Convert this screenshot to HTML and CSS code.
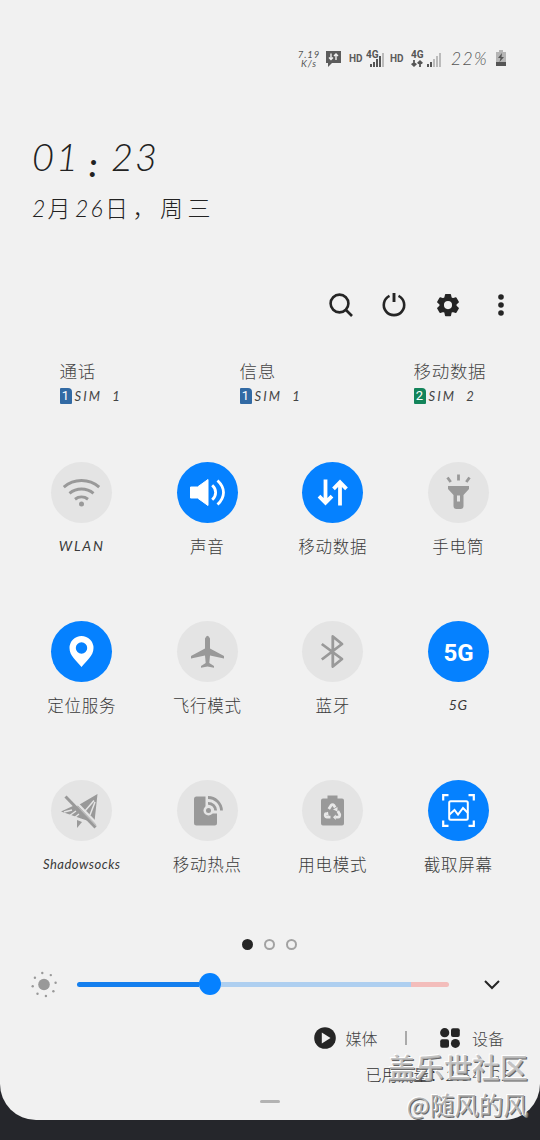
FILE: index.html
```html
<!DOCTYPE html>
<html lang="zh-CN">
<head>
<meta charset="utf-8">
<title>快捷设置</title>
<link rel="stylesheet" href="styles.css">
</head>
<body>
<main class="panel">
  <header class="status">
    <div class="speed"><span>7.19</span><span>K/s</span></div>
    <svg class="bubble" width="17" height="18" viewBox="0 0 17 18"><path fill="#5c5c5c" d="M1 1h15v12H7l-4 4v-4H1z"/><path d="M6 3.500v6M4 7.500l2 2 2-2M11 10V4M9 6l2-2 2 2" fill="none" stroke="#f1f1f1" stroke-width="1.400"/></svg>
    <span class="hd">HD</span>
    <svg class="sig1" width="20" height="20" viewBox="0 0 20 20"><text class="net" x="0" y="9">4G</text><path fill="#555" d="M4 15h2v3H4zM7 13h2v5H7zM10 10h2v8h-2zM13 7h2v11h-2z"/><path fill="#bbb" d="M16 4h2v14h-2z"/></svg>
    <span class="hd">HD</span>
    <svg class="sig2" width="31" height="20" viewBox="0 0 31 20"><text class="net" x="0" y="9">4G</text><path d="M3 11v6M.7 14.500l2.300 2.300 2.300-2.300M9 18v-6M6.700 14.500L9 12.200l2.300 2.300" stroke="#555" stroke-width="1.800" fill="none"/><path fill="#555" d="M16 15h2v3h-2zM19 13h2v5h-2z"/><path fill="#bbb" d="M22 10h2v8h-2zM25 7h2v11h-2zM28 4h2v14h-2z"/></svg>
    <span class="percent">22%</span>
    <svg class="battery" width="12" height="17" viewBox="0 0 12 17"><path fill="#b5b5b5" d="M4 0h4v2h3v11H1V2h3z"/><path fill="#555" d="M1 12h10v4H1zM7 3L3 8h2.500L4.500 12 9 7H6.500z"/></svg>
  </header>

  <section class="clock"><span>01</span><span class="colon">:</span><span>23</span></section>
  <section class="date"><i>2</i>月<i>26</i>日，周三</section>

  <nav class="actions">
    <svg viewBox="0 0 28 28"><g fill="none" stroke="#252525" stroke-width="2.600"><circle cx="12.500" cy="12.500" r="8.900"/><path d="M18.500 18.500l6.500 6.500"/></g></svg>
    <svg viewBox="0 0 28 28"><g fill="none" stroke="#252525" stroke-width="2.600"><path d="M9.500 4.800a10.200 10.200 0 1 0 9 0"/><path stroke-width="2.900" d="M14 2v9"/></g></svg>
    <svg viewBox="0 0 28 28"><path fill="#252525" stroke="#252525" stroke-width="1.500" stroke-linejoin="round" fill-rule="evenodd" d="M11.700 3.800h4.600l.7 3.200 1.800 1 3.100-1 2.300 4-2.400 2.200v1.800l2.400 2.200-2.300 4-3.100-1-1.800 1-.7 3.200h-4.600l-.7-3.200-1.800-1-3.100 1-2.300-4 2.400-2.200v-1.800L3.800 11l2.300-4 3.100 1 1.800-1zM14 9.300a4.800 4.800 0 1 0 0 9.600 4.800 4.800 0 0 0 0-9.600z"/></svg>
    <svg viewBox="0 0 28 28"><g fill="#252525"><circle cx="14" cy="6" r="2.800"/><circle cx="14" cy="14" r="2.800"/><circle cx="14" cy="22" r="2.800"/></g></svg>
  </nav>

  <section class="sims">
    <div class="sim"><b>通话</b><div><span class="chip">1</span><i>SIM&nbsp; 1</i></div></div>
    <div class="sim"><b>信息</b><div><span class="chip">1</span><i>SIM&nbsp; 1</i></div></div>
    <div class="sim"><b>移动数据</b><div><span class="chip green">2</span><i>SIM&nbsp; 2</i></div></div>
  </section>

  <section class="tiles">
    <div class="tile"><svg viewBox="0 0 61 61"><g fill="none" stroke="#999" stroke-width="3"><path d="M12.800 25.200a27 27 0 0 1 35.400 0"/><path d="M18.500 31.300a19 19 0 0 1 24 0"/><path d="M24 37.200a11 11 0 0 1 13 0"/></g><circle cx="30.500" cy="42" r="2.500" fill="#999"/></svg><i class="wlan">WLAN</i></div>
    <div class="tile on"><svg viewBox="0 0 61 61"><path fill="#fff" stroke="#fff" stroke-linejoin="round" d="M13.500 25h7L31 17.500v26L20.500 36h-7z"/><g fill="none" stroke="#fff" stroke-width="2.800"><path d="M35.200 23.300c4.600 4.200 4.600 10.200 0 14.400"/><path d="M40.500 18.400c8 7.500 8 16.700 0 24.200"/></g></svg><span>声音</span></div>
    <div class="tile on"><svg viewBox="0 0 61 61"><g fill="none" stroke="#fff" stroke-width="3.800"><path d="M23.500 17.500v23M17 34.200l6.500 6.500 6.500-6.500M38 43.500v-23M31.500 26.800l6.500-6.500 6.500 6.500"/></g></svg><span>移动数据</span></div>
    <div class="tile"><svg viewBox="0 0 61 61"><path fill="#999" fill-rule="evenodd" d="M20 24h21v3l-5.500 6v11q0 3-3 3h-4q-3 0-3-3V33L20 27zM29 33.500v6h3v-6z"/><path d="M30.500 12.500v6M19.500 15.500l3.200 4.500M41.500 15.500L38.300 20" stroke="#999" stroke-width="2.800"/></svg><span>手电筒</span></div>

    <div class="tile on"><svg viewBox="0 0 61 61"><path fill="#fff" fill-rule="evenodd" d="M30.500 15a12 12 0 0 0-12 12c0 8 7 12.500 12 19 5-6.500 12-11 12-19a12 12 0 0 0-12-12zm0 6.300a5.700 5.700 0 1 1 0 11.400 5.700 5.700 0 0 1 0-11.400z"/></svg><span>定位服务</span></div>
    <div class="tile"><svg viewBox="0 0 61 61"><path fill="#999" d="M28 17.500q2.500-5.500 5 0v10L47 35v2.500L33 34.500l-.7 7.500 4.700 3v1.700l-6.500-1.200-6.500 1.200V45l4.700-3-.7-7.500-14 3V35l14-7.500z"/></svg><span>飞行模式</span></div>
    <div class="tile"><svg viewBox="0 0 61 61"><path fill="none" stroke="#999" stroke-width="2.800" stroke-linejoin="round" d="M19.800 23L40 38l-9.200 7.500V15.500L40 23 19.800 38.500"/></svg><span>蓝牙</span></div>
    <div class="tile on"><svg viewBox="0 0 61 61"><text class="five" x="30.500" y="40" text-anchor="middle">5G</text></svg><i>5G</i></div>

    <div class="tile"><svg viewBox="0 0 61 61"><path fill="#999" d="M46.500 14L26 26l20 20-2.500-4.500zM10 31.500L23 25.500 39 41.500l-9-3z"/><path fill="#999" d="M26 40l5 2-5 6z"/><path d="M43 20.500L34 31M44 22l-5 13M13 32l8-2M18 36l7-5M23 38l5-4" stroke="#e4e4e4" stroke-width="1.500"/><path d="M17.200 14l30 31" stroke="#e4e4e4" stroke-width="2.500"/><path d="M14.500 16.500l30 31" stroke="#999" stroke-width="3"/></svg><i class="wide">Shadowsocks</i></div>
    <div class="tile"><svg viewBox="0 0 61 61"><rect x="17" y="16.500" width="23" height="29" rx="2.500" fill="#999"/><path d="M28.500 14H48v19.500H28.500z" fill="#e4e4e4"/><circle cx="31.500" cy="30.500" r="5" fill="#e4e4e4"/><circle cx="31.500" cy="30.500" r="2.500" fill="#999"/><path fill="none" stroke="#999" stroke-width="2.800" d="M31 17.500A13.500 13.500 0 0 1 44.500 30.500M31 23.300a7.500 7.500 0 0 1 7.700 7.200"/></svg><span>移动热点</span></div>
    <div class="tile"><svg viewBox="0 0 61 61"><path fill="#999" d="M25.500 15.500h10v3H40q2 0 2 2v23q0 2-2 2H21q-2 0-2-2v-23q0-2 2-2h4.500z"/><g fill="none" stroke="#e8e8e8" stroke-width="2.800"><path d="M26.800 29l2.200-3.500q1.500-1.700 3 0l1.200 2M35.800 31l1.900 3.500q.3 2.500-1.700 2.700h-2.500M28.500 37.200h-3.500q-2.200-.5-1.700-2.500l.9-1.700"/></g><path fill="#e8e8e8" d="M31 29.500l4.500-2.500v4.500zM33.800 34.500v5.400L31 37.200zM22 33.300l4-1.500.7 4.500z"/></svg><span>用电模式</span></div>
    <div class="tile on"><svg viewBox="0 0 61 61"><g fill="none" stroke="#fff"><path stroke-width="2.200" d="M15.200 20.500v-5.300h5.300M40.500 15.200h5.300v5.300M45.800 40.500v5.300h-5.300M20.500 45.800h-5.300v-5.300"/><rect x="21.200" y="21.200" width="18.600" height="18.600" rx="1.500" stroke-width="2"/><path stroke-width="2" d="M21.500 34.500l5-4.500 3.500 4.500 5-6.500 5 5"/></g></svg><span>截取屏幕</span></div>
  </section>

  <div class="dots"><span class="dot full"></span><span class="dot"></span><span class="dot"></span></div>

  <section class="brightness">
    <svg width="28" height="28" viewBox="0 0 28 28"><circle cx="14" cy="14.500" r="5.800" fill="#999"/><g fill="#999"><circle cx="12.300" cy="3" r="1.200"/><circle cx="20.800" cy="5.100" r="1.200"/><circle cx="25.600" cy="12.800" r="1.200"/><circle cx="23.400" cy="21.200" r="1.200"/><circle cx="15.900" cy="26" r="1.200"/><circle cx="7.500" cy="23.800" r="1.200"/><circle cx="2.700" cy="16.200" r="1.200"/><circle cx="4.900" cy="7.700" r="1.200"/></g></svg>
    <div class="track"><span class="filled"></span><span class="knob"></span><span class="rest"></span><span class="hot"></span></div>
    <svg class="chev" width="18" height="12" viewBox="0 0 18 12"><path d="M2 2l7 7 7-7" fill="none" stroke="#252525" stroke-width="2"/></svg>
  </section>

  <section class="outputs">
    <svg width="22" height="22" viewBox="0 0 22 22"><circle cx="11" cy="11" r="10.800" fill="#252525"/><path d="M7.800 5.500l8.700 5.500-8.700 5.500z" fill="#f1f1f1"/></svg>
    <span class="media">媒体</span>
    <span class="rule"></span>
    <svg width="20" height="20" viewBox="0 0 20 20"><g fill="#252525"><circle cx="4.700" cy="4.700" r="4.600"/><rect x="11" y=".3" width="8.800" height="8.800" rx="2"/><rect x=".2" y="11.200" width="8.800" height="8.600" rx="2"/><circle cx="15.400" cy="15.400" r="4.500"/></g></svg>
    <span class="device">设备</span>
  </section>
  <p class="usage">已用流量：<i>2.54 GB</i></p>
  <div class="handle"></div>
</main>
<aside class="watermark"><div class="site">盖乐世社区</div><div class="user">@随风的风</div></aside>
</body>
</html>
```
FILE: styles.css
```css
* { box-sizing: border-box; }
body {
  margin: 0;
  width: 540px;
  height: 1140px;
  overflow: hidden;
  background: #25262b;
  color: #333;
  font-family: "Noto Sans CJK SC", sans-serif;
  font-weight: 300;
}
svg { display: block; flex: none; }
i, .clock, .speed, .percent { font-family: Lato, "Noto Sans CJK SC", sans-serif; font-style: italic; font-weight: 300; }
.panel {
  height: 1120px;
  background: #f1f1f1;
  border-radius: 0 0 36px 36px;
  display: flex;
  flex-direction: column;
}
.status {
  height: 76px;
  padding: 41px 33px 0 0;
  display: flex;
  align-items: center;
  justify-content: flex-end;
  color: #555;
}
.speed { width: 24px; margin-right: 4px; display: flex; flex-direction: column; align-items: center; font-size: 9.5px; line-height: 9px; letter-spacing: .9px; font-weight: 400; white-space: nowrap; }
.bubble { margin-right: 7px; }
.hd { width: 14px; font: 700 10px/20px Roboto, sans-serif; color: #5c5c5c; white-space: nowrap; }
.sig1 { margin: 0 4px 0 3px; }
.sig2 { margin: 0 9px 0 7px; }
.net { font: 700 10px Roboto, sans-serif; fill: #555; }
.percent { width: 39px; margin-right: 5px; font-size: 17.5px; line-height: 20px; letter-spacing: 1.4px; white-space: nowrap; }
.clock { height: 56px; margin-top: 52px; padding-left: 32px; display: flex; font-size: 38px; line-height: 56px; letter-spacing: 2px; color: #222; font-weight: 300; }
.colon { width: 33px; margin-top: 9px; padding-left: 11px; font-size: 32px; font-weight: 700; }
.clock span:first-child { width: 46px; }
.date { height: 50px; padding-left: 32px; font-size: 23px; line-height: 47px; letter-spacing: 4.5px; white-space: nowrap; color: #222; }
.date i { letter-spacing: 2.2px; }
.actions { height: 28px; margin-top: 57px; padding-right: 25px; display: flex; justify-content: flex-end; gap: 25.500px; }
.actions svg { width: 28px; height: 28px; }
.sims { height: 50px; margin-top: 39px; padding-left: 59.500px; display: flex; }
.sim { width: 180px; color: #444; }
.sim:nth-child(2) { width: 174px; }
.sim:last-child { width: 100px; }
.sim b { display: block; font-size: 17.5px; line-height: 26px; font-weight: 300; letter-spacing: .7px; }
.sim div { display: flex; align-items: center; height: 24px; gap: 3px; }
.sim i { font-size: 13px; letter-spacing: 2.1px; font-weight: 400; white-space: nowrap; }
.chip { width: 12px; height: 16px; border-radius: 1px 4px 1px 1px; background: #326aa4; color: #fff; font: 400 13px/16px Roboto, sans-serif; text-align: center; }
.green { background: #13845a; }
.tiles { height: 477px; margin-top: 54px; padding: 0 19px; display: grid; grid-template-columns: repeat(4, 125.500px); grid-auto-rows: 159px; }
.tile { display: flex; flex-direction: column; align-items: center; color: #3a3a3a; font-size: 16.5px; line-height: 26px; letter-spacing: .8px; white-space: nowrap; }
.tile svg { width: 61px; height: 61px; border-radius: 50%; background: #e4e4e4; margin-bottom: 10px; }
.tile.on svg { background: #0581ff; }
.tile i { font-size: 14px; letter-spacing: .8px; font-weight: 400; }
.tile .wlan { letter-spacing: 1.8px; }
.tile .wide { font-size: 13px; letter-spacing: .5px; }
.five { font: 700 24px Roboto, sans-serif; fill: #fff; letter-spacing: 0; }
.dots { height: 12px; padding-right: 1px; display: flex; justify-content: center; gap: 11px; }
.dot { width: 11px; height: 11px; border: 2px solid #a2a2a2; border-radius: 50%; }
.full { background: #252525; border-color: #252525; }
.brightness { height: 28px; margin-top: 19px; padding-left: 30px; display: flex; align-items: center; }
.track { width: 372px; height: 24px; margin-left: 19px; display: flex; align-items: center; }
.filled, .rest, .hot { height: 5px; }
.filled { width: 122px; background: #147fee; border-radius: 3px 0 0 3px; }
.knob { width: 22px; height: 22px; border-radius: 50%; background: #0581ff; }
.rest { width: 190px; background: #aecff0; }
.hot { width: 38px; background: #f3bdbb; border-radius: 0 3px 3px 0; }
.chev { margin: 1px 0 0 34px; }
.outputs { height: 24px; margin-top: 28px; padding-right: 36px; display: flex; align-items: center; justify-content: flex-end; font-size: 16px; color: #444; }
.media { margin-left: 9px; }
.rule { width: 1.500px; height: 14px; margin: 0 33px 0 28px; background: #aaa; }
.device { margin-left: 12px; }
.usage { margin: 12px 28px 0 0; height: 24px; text-align: right; font-size: 16px; line-height: 24px; white-space: nowrap; color: #333; }
.usage i { letter-spacing: 1.500px; }
.handle { width: 20px; height: 3px; margin: 14px auto 0; border-radius: 2px; background: #b3b3b3; }
.watermark { position: absolute; right: 12px; top: 1047px; text-align: right; white-space: nowrap; }
.site { font-size: 28px; line-height: 40px; font-weight: 500; color: rgba(185,185,185,.85); text-shadow: -1px -1px 0 #fff, 1px 1px 0 #666; }
.user { font-size: 24.5px; line-height: 36px; font-weight: 400; color: rgba(170,170,170,.9); text-shadow: -1px -1px 0 #fff, 1px 1px 0 #666; }
```
